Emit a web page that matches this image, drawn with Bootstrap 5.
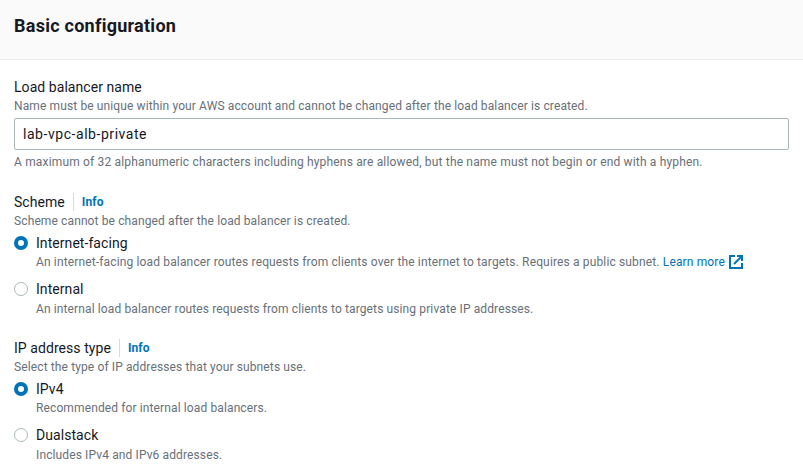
<!DOCTYPE html>
<html lang="en">
<head>
  <meta charset="UTF-8">
  <title>Basic configuration</title>
  <meta name="viewport" content="width=device-width, initial-scale=1">
  <link href="https://cdn.jsdelivr.net/npm/bootstrap@5.3.0/dist/css/bootstrap.min.css" rel="stylesheet">
  <style>
    body {
      font-family: Roboto, "Noto Sans", sans-serif;
      font-size: 14px;
      line-height: 20px;
      color: #16191f;
      background: #fff;
      overflow: hidden;
    }
    .cfg-head {
      height: 60px;
      background: #fafafa;
      border-bottom: 1px solid #eaeded;
      padding: 15px 15px 0 14px;
    }
    .cfg-head h2 {
      font-size: 18px;
      line-height: 22px;
      font-weight: 700;
      letter-spacing: .26px;
      margin: 0;
      font-family: Roboto, sans-serif;
    }
    .cfg-body { padding: 17px 14px 0; }
    .cfg-label { font-size: 14px; line-height: 20px; letter-spacing: .06px; color: #16191f; padding-bottom: 1px; }
    .cfg-desc { font-size: 12px; line-height: 16px; letter-spacing: .12px; color: #687078; }
    .cfg-input.form-control {
      height: 32px;
      margin-top: 4px;
      padding: 4px 8px;
      font-size: 14px;
      line-height: 20px;
      letter-spacing: .55px;
      color: #16191f;
      border: 1px solid #aab7b8;
      border-radius: 2px;
    }
    .cfg-hint { margin-top: 4px; letter-spacing: .17px; }
    .cfg-long { letter-spacing: .145px; }
    .cfg-field { margin-top: 22px; }
    .cfg-field + .cfg-field { margin-top: 21px; }
    .cfg-info {
      font-size: 12px;
      font-weight: 700;
      letter-spacing: .1px;
      color: #0073bb;
      text-decoration: none;
      border-left: 1px solid #d5dbdb;
      padding-left: 8px;
      margin-left: 8px;
      line-height: 18px;
    }
    .cfg-radio { margin-top: 4px; gap: 8px; }
    .cfg-radio + .cfg-radio { margin-top: 9px; }
    .cfg-radio + .cfg-radio .cfg-label { padding-bottom: 2px; }
    .cfg-dot {
      flex: none;
      width: 14px;
      height: 14px;
      margin-top: 3px;
      border-radius: 50%;
      border: 1px solid #aab7b8;
      background: #fff;
    }
    .cfg-dot.is-on { border: 4px solid #0073bb; }
    .cfg-link { color: #0073bb; text-decoration: none; }
    .cfg-ext { vertical-align: -3px; margin-left: 1px; }
  </style>
</head>
<body>

<div class="cfg-head">
  <h2>Basic configuration</h2>
</div>

<div class="cfg-body">
  <!-- Load balancer name -->
  <div class="cfg-label">Load balancer name</div>
  <div class="cfg-desc">Name must be unique within your AWS account and cannot be changed after the load balancer is created.</div>
  <input type="text" class="form-control cfg-input" value="lab-vpc-alb-private">
  <div class="cfg-desc cfg-hint">A maximum of 32 alphanumeric characters including hyphens are allowed, but the name must not begin or end with a hyphen.</div>

  <!-- Scheme -->
  <div class="cfg-field">
    <div class="cfg-label d-flex align-items-center">Scheme<a href="#" class="cfg-info">Info</a></div>
    <div class="cfg-desc">Scheme cannot be changed after the load balancer is created.</div>
    <div class="cfg-radio d-flex">
      <span class="cfg-dot is-on"></span>
      <div>
        <div class="cfg-label">Internet-facing</div>
        <div class="cfg-desc cfg-long">An internet-facing load balancer routes requests from clients over the internet to targets. Requires a public subnet. <a href="#" class="cfg-link">Learn more</a>
          <svg class="cfg-ext" width="14" height="14" viewBox="0 0 14 14" fill="none" stroke="#0073bb" stroke-width="2"><path d="M6 1H1V13H13V8"/><path d="M5 9L12 2"/><path d="M8 1H13V6"/></svg>
        </div>
      </div>
    </div>
    <div class="cfg-radio d-flex">
      <span class="cfg-dot"></span>
      <div>
        <div class="cfg-label">Internal</div>
        <div class="cfg-desc">An internal load balancer routes requests from clients to targets using private IP addresses.</div>
      </div>
    </div>
  </div>

  <!-- IP address type -->
  <div class="cfg-field">
    <div class="cfg-label d-flex align-items-center">IP address type<a href="#" class="cfg-info">Info</a></div>
    <div class="cfg-desc">Select the type of IP addresses that your subnets use.</div>
    <div class="cfg-radio d-flex">
      <span class="cfg-dot is-on"></span>
      <div>
        <div class="cfg-label">IPv4</div>
        <div class="cfg-desc">Recommended for internal load balancers.</div>
      </div>
    </div>
    <div class="cfg-radio d-flex">
      <span class="cfg-dot"></span>
      <div>
        <div class="cfg-label">Dualstack</div>
        <div class="cfg-desc">Includes IPv4 and IPv6 addresses.</div>
      </div>
    </div>
  </div>
</div>

<script src="https://cdn.jsdelivr.net/npm/bootstrap@5.3.0/dist/js/bootstrap.bundle.min.js"></script>
</body>
</html>
